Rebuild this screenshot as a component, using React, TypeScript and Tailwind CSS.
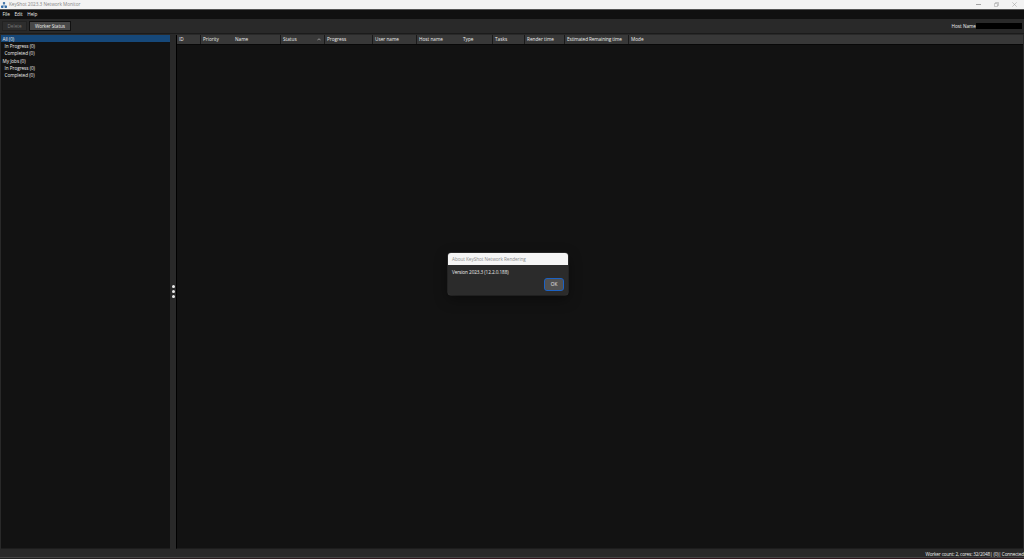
import { useState } from 'react';

type Column = { label: string; width: string; line?: boolean; sorted?: boolean; tight?: boolean };

const columns: Column[] = [
  { label: 'ID', width: 'w-[24px]', line: true },
  { label: 'Priority', width: 'w-[32px]' },
  { label: 'Name', width: 'w-[48px]', line: true },
  { label: 'Status', width: 'w-[44px]', line: true, sorted: true },
  { label: 'Progress', width: 'w-[48px]', line: true },
  { label: 'User name', width: 'w-[44px]', line: true },
  { label: 'Host name', width: 'w-[44px]' },
  { label: 'Type', width: 'w-[32px]', line: true },
  { label: 'Tasks', width: 'w-[32px]', line: true },
  { label: 'Render time', width: 'w-[40px]', line: true },
  { label: 'Estimated Remaining time', width: 'w-[64px]', line: true, tight: true },
];

const queues = [
  { label: 'All (0)', child: false },
  { label: 'In Progress (0)', child: true },
  { label: 'Completed (0)', child: true },
  { label: 'My Jobs (0)', child: false },
  { label: 'In Progress (0)', child: true },
  { label: 'Completed (0)', child: true },
];

function AppIcon() {
  return (
    <svg viewBox="0 0 12 12" className="size-[6px]" fill="none">
      <path d="M6 3v3M2.5 9L6 5.5 9.5 9" stroke="#7d9dbf" strokeWidth="1.4" />
      <rect x="3.7" y="0" width="4.6" height="4.6" rx="1.4" fill="#4777aa" />
      <rect x="0" y="6.8" width="5" height="5" rx="1.4" fill="#356da7" />
      <rect x="7" y="6.8" width="5" height="5" rx="1.4" fill="#356da7" />
    </svg>
  );
}

function WindowControls() {
  return (
    <div className="flex items-center gap-[13px] pr-[7px] text-[#9a9a9a]">
      <svg viewBox="0 0 5 5" className="size-[5px]" stroke="currentColor" strokeWidth="0.9">
        <path d="M0 2.5h5" />
      </svg>
      <svg viewBox="0 0 5 5" className="size-[5px]" fill="none" stroke="currentColor" strokeWidth="0.5">
        <path d="M0.5 1.5h3v3h-3zM1.5 1.5v-1h3v3h-1" />
      </svg>
      <svg viewBox="0 0 5 5" className="size-[5px]" stroke="currentColor" strokeWidth="0.5">
        <path d="M0.3 0.3l4.4 4.4M4.7 0.3L0.3 4.7" />
      </svg>
    </div>
  );
}

export default function App() {
  const [selected, setSelected] = useState(0);
  const [aboutOpen, setAboutOpen] = useState(true);

  return (
    <main className="relative flex h-[559px] w-[1024px] flex-col overflow-hidden bg-[#292929] font-['Open_Sans',sans-serif] text-[4.7px] leading-[7px] whitespace-nowrap text-[#ededed]">
      {/* Title bar */}
      <header className="flex h-[9px] shrink-0 items-center justify-between bg-[#f3f3f3] pl-[1px] text-[#858585]">
        <div className="flex items-center gap-[2px] tracking-[-0.03px]">
          <AppIcon />
          <span>KeyShot 2023.3 Network Monitor</span>
        </div>
        <WindowControls />
      </header>

      {/* Menu */}
      <nav className="flex h-[10px] shrink-0 items-center gap-[4.5px] border-t border-[#555] bg-[#101010] pl-[2.5px]">
        <span>File</span>
        <span>Edit</span>
        <span>Help</span>
      </nav>

      {/* Toolbar */}
      <div className="flex h-[14px] shrink-0 items-center justify-between bg-[#292929] pr-[2px] pl-[2px]">
        <div className="flex items-center gap-[2px]">
          <button className="h-[10px] w-[25px] border border-[#222] bg-[#2d2d2d] leading-[8px] text-[#777]">Delete</button>
          <button className="h-[10px] w-[42px] border border-[#111] bg-[#484848] leading-[8px] tracking-[-0.08px]">Worker Status</button>
        </div>
        <div className="flex items-center">
          <span>Host Name</span>
          <span className="h-[6px] w-[46px] bg-black" />
        </div>
      </div>

      <div className="flex h-[516px] shrink-0 border-t border-[#1b1b1b] pt-px pr-px pl-px">
        {/* Job queues */}
        <aside className="w-[169px] border-b border-[#1d1d1d] bg-[#121212]">
          {queues.map((queue, i) => (
            <div
              key={i}
              onClick={() => setSelected(i)}
              className={`h-[7.2px] leading-[8.4px] tracking-[-0.05px] ${queue.child ? 'pl-[3.5px]' : 'pl-[1.5px]'} ${selected === i ? 'bg-[#164879]' : ''}`}
            >
              {queue.label}
            </div>
          ))}
        </aside>

        {/* Splitter */}
        <div className="flex w-[6px] flex-col items-center justify-center gap-[2px] bg-[#292929] pb-[2px]">
          <i className="size-[3px] rounded-full bg-[#e8e8e8]" />
          <i className="size-[3px] rounded-full bg-[#e8e8e8]" />
          <i className="size-[3px] rounded-full bg-[#e8e8e8]" />
        </div>

        {/* Job table */}
        <section className="flex-1 border-b border-l border-[#1d1d1d] border-l-black bg-[#121212]">
          <div className="flex h-[10px] items-center border-b border-[#080808] bg-[#383838]">
            {columns.map(col => (
              <div
                key={col.label}
                className={`flex h-full shrink-0 items-center justify-between pr-[3px] pl-[2px] ${col.width} ${col.tight ? 'tracking-[-0.1px]' : ''} ${col.line ? 'border-r border-[#1a1a1a]' : ''}`}
              >
                <span>{col.label}</span>
                {col.sorted && (
                  <svg viewBox="0 0 4 3" className="h-[3px] w-[4px]" fill="none" stroke="#bbb" strokeWidth="0.7">
                    <path d="M0.4 2.3L2 0.7l1.6 1.6" />
                  </svg>
                )}
              </div>
            ))}
            <div className="pl-[2px]">Mode</div>
          </div>
        </section>
      </div>

      {/* Status bar */}
      <footer className="flex h-[8px] shrink-0 items-center justify-end pt-[2px] tracking-[-0.16px]">
        <span>Worker count: 2, cores: 32/2048| (0)| Connected</span>
      </footer>
      <div className="h-px shrink-0 bg-[#444]" />
      <div className="h-px shrink-0 bg-gradient-to-r from-[#222] via-[#38171f] to-[#30181e]" />

      {/* About dialog */}
      {aboutOpen && (
        <div
          role="dialog"
          className="absolute top-[252.5px] left-[448px] flex h-[42.5px] w-[120px] flex-col overflow-hidden rounded-[3px] bg-[#2b2b2b] shadow-[0_4px_14px_rgba(0,0,0,0.4),0_0_0_0.5px_#444]"
        >
          <div className="h-[12.5px] shrink-0 bg-[#f5f5f5] pl-[4px] leading-[13px] tracking-[-0.06px] text-[#8c8c8c]">
            About KeyShot Network Rendering
          </div>
          <p className="mt-[4px] pl-[4px] tracking-[-0.08px]">Version 2023.3 (12.2.0.188)</p>
          <button
            onClick={() => setAboutOpen(false)}
            className="mt-[1.5px] mr-[4px] h-[13px] w-[20px] self-end rounded-[3px] border border-[#1c62c4] bg-[#515151] leading-[11px]"
          >
            OK
          </button>
        </div>
      )}
    </main>
  );
}
